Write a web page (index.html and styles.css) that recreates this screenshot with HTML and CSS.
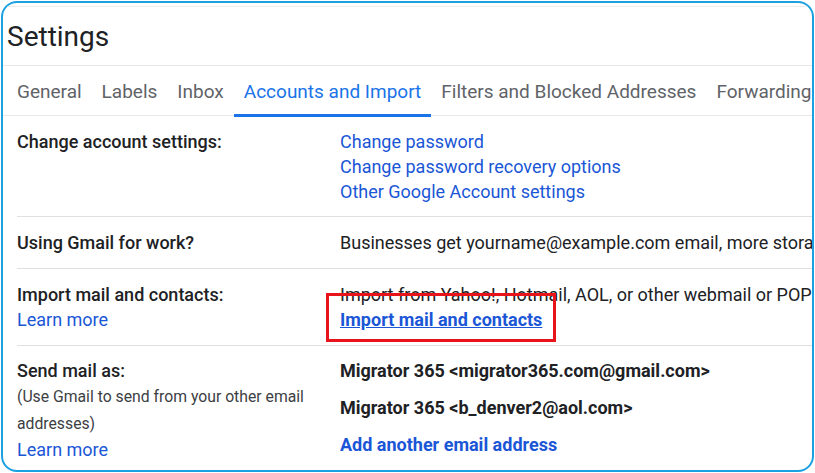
FILE: index.html
```html
<!DOCTYPE html>
<html lang="en">
  <head>
    <meta charset="UTF-8" />
    <title>Settings</title>
    <link rel="stylesheet" href="styles.css">
  </head>
  <body>
    <div class="frame">
      <div class="header">
        <h1>Settings</h1>
      </div>
      <div class="tabs">
        <div class="tab">General</div>
        <div class="tab">Labels</div>
        <div class="tab">Inbox</div>
        <div class="tab active">Accounts and Import</div>
        <div class="tab">Filters and Blocked Addresses</div>
        <div class="tab">Forwarding and POP/IMAP</div>
      </div>

      <div class="row first">
        <div class="label"><b>Change account settings:</b></div>
        <div class="value">
          <a href="#">Change password</a><br />
          <a href="#">Change password recovery options</a><br />
          <a href="#">Other Google Account settings</a>
        </div>
      </div>

      <div class="row">
        <div class="label"><b>Using Gmail for work?</b></div>
        <div class="value">
          Businesses get yourname@example.com email, more storage, and admin tools
        </div>
      </div>

      <div class="row">
        <div class="label">
          <b>Import mail and contacts:</b><br />
          <a href="#">Learn more</a>
        </div>
        <div class="value">
          Import from Yahoo!, Hotmail, AOL, or other webmail or POP3 accounts.
          <div class="marked"><a href="#" class="strong">Import mail and contacts</a></div>
        </div>
      </div>

      <div class="row">
        <div class="label">
          <b>Send mail as:</b><br />
          <div class="note">(Use Gmail to send from your other email addresses)</div>
          <a href="#">Learn more</a>
        </div>
        <div class="value">
          <div class="sender">Migrator 365 &lt;migrator365.com@gmail.com&gt;</div>
          <div class="sender">Migrator 365 &lt;b_denver2@aol.com&gt;</div>
          <a href="#" class="plain">Add another email address</a>
        </div>
      </div>
    </div>
  </body>
</html>
```

FILE: styles.css
```css
* {
  margin: 0px;
  padding: 0px;
  box-sizing: border-box;
}
body {
  background-color: #ffffff;
  font-family: Roboto, "Liberation Sans", sans-serif;
  color: #202124;
}
.frame {
  width: 813px;
  height: 471px;
  margin: 1px 0 0 1px;
  border: 2px solid #1ba1e2;
  border-radius: 16px;
  overflow: hidden;
  background-color: #fff;
}
.header {
  margin-top: 3px;
  border-top: 1px solid #ececec;
  border-bottom: 1px solid #e8e8e8;
  height: 60px;
  padding: 12px 0 0 4px;
}
h1 {
  font-weight: 400;
  font-size: 28px;
  line-height: 36px;
  color: #202124;
}
.tabs {
  display: flex;
  align-items: flex-start;
  height: 50px;
  padding-left: 4px;
  border-bottom: 1px solid #e8e8e8;
  white-space: nowrap;
}
.tab {
  padding: 2px 10px 0;
  font-size: 19px;
  line-height: 47px;
  color: #5f6368;
}
.active {
  color: #1a73e8;
  border-bottom: 3px solid #1a73e8;
  padding-top: 3px;
  line-height: 45px;
}
.row {
  display: flex;
  margin-left: 14px;
  padding: 13px 0 13px;
  border-bottom: 1px solid #e0e0e0;
  font-size: 18px;
  line-height: 25px;
  white-space: nowrap;
}
.first {
  padding-bottom: 12px;
}
.row:last-child {
  padding-top: 12px;
  border-bottom: none;
}
.label {
  width: 323px;
  flex-shrink: 0;
}
.label b {
  font-weight: 500;
}
a {
  color: #1a56d6;
  text-decoration: none;
}
.note {
  font-size: 15.75px;
  line-height: 27px;
  white-space: normal;
  width: 300px;
  color: #3c4043;
}
.marked {
  position: relative;
  width: fit-content;
}
.marked::after {
  content: "";
  box-sizing: border-box;
  position: absolute;
  left: -14px;
  top: -14px;
  width: 230px;
  height: 49px;
  border: 3px solid #e8141c;
}
.strong {
  font-weight: 700;
  text-decoration: underline;
}
.sender {
  font-weight: 700;
  margin-bottom: 12px;
}
.plain {
  font-weight: 700;
}
```
